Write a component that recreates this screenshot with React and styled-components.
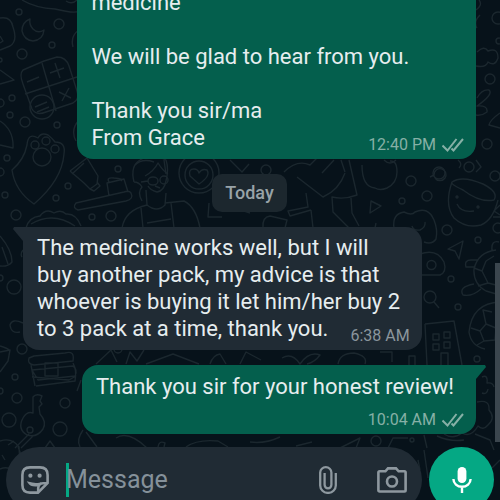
import { createGlobalStyle, styled } from "styled-components";

export default function App() {
    return (
        <Screen>
            <GlobalStyle />
            <Wallpaper />
            <Chat>
                <Bubble $sent $wide>
                    <Text>{"medicine\n\nWe will be glad to hear from you.\n\nThank you sir/ma\nFrom Grace"}</Text>
                    <Meta $sent>
                        12:40 PM <Ticks />
                    </Meta>
                </Bubble>
                <Day>Today</Day>
                <Bubble $wide $tail>
                    <Text>
                        The medicine works well, but I will buy another pack, my advice is that whoever is
                        buying it let him/her buy 2 to 3 pack at a time, thank you.
                    </Text>
                    <Meta>6:38 AM</Meta>
                </Bubble>
                <Bubble $sent $tail $stacked>
                    <Text>Thank you sir for your honest review!</Text>
                    <Meta $sent>
                        10:04 AM <Ticks />
                    </Meta>
                </Bubble>
            </Chat>
            <Composer>
                <Field>
                    <IconButton type="button" aria-label="Stickers">
                        <StickerIcon />
                    </IconButton>
                    <Entry>
                        <Caret />
                        <Input type="text" placeholder="Message" aria-label="Message" />
                    </Entry>
                    <IconButton type="button" aria-label="Attach">
                        <ClipIcon />
                    </IconButton>
                    <IconButton type="button" aria-label="Camera">
                        <CameraIcon />
                    </IconButton>
                </Field>
                <MicButton type="button" aria-label="Record voice message">
                    <MicIcon />
                </MicButton>
            </Composer>
            <ScrollThumb />
        </Screen>
    )
}

const Ticks = () => (
    <svg width="22" height="14" viewBox="0 0 22 14" fill="none" stroke="currentColor" strokeWidth="2">
        <path d="M0.5 7.5 5.5 12.5 14.5 1M9.5 10.5 11.5 12.5 21 1" />
    </svg>
)

const StickerIcon = () => (
    <svg width="28" height="28" viewBox="0 0 28 28" fill="none" stroke="currentColor" strokeWidth="2.6">
        <path d="M9 1.4H19Q26.6 1.4 26.6 9V17L17 26.6H9Q1.4 26.6 1.4 19V9Q1.4 1.4 9 1.4Z" />
        <path d="M26 17.2H22Q17.5 17.2 17.2 22V26" />
        <path d="M7.6 16.6Q10 20.5 16.5 19.6L18.5 17.5Q13 18.4 7.6 16.6Z" fill="currentColor" strokeWidth="1.6" />
        <circle cx="9.4" cy="9.7" r="2.1" fill="currentColor" stroke="none" />
        <circle cx="18.6" cy="9.7" r="2.1" fill="currentColor" stroke="none" />
    </svg>
)

const ClipIcon = () => (
    <svg width="18" height="28" viewBox="0 0 18 28" fill="none" stroke="currentColor" strokeWidth="2.3">
        <path d="M16.8 7V19.5A7.8 7.4 0 0 1 1.2 19.5V6.5A5.6 5.3 0 0 1 12.4 6.5V18.8A3.3 3.5 0 0 1 5.6 18.8V7" />
    </svg>
)

const CameraIcon = () => (
    <svg width="30" height="26" viewBox="0 0 30 26" fill="none" stroke="currentColor" strokeWidth="2.6">
        <path d="M2.6 4.3H8.4L11 1.4H19L21.6 4.3H27.4Q28.6 4.3 28.6 5.5V23.3Q28.6 24.5 27.4 24.5H2.6Q1.4 24.5 1.4 23.3V5.5Q1.4 4.3 2.6 4.3Z" />
        <circle cx="15" cy="14.5" r="5" />
    </svg>
)

const MicIcon = () => (
    <svg width="20" height="28" viewBox="0 0 20 28" fill="none" stroke="currentColor" strokeWidth="2.4">
        <rect x="5.6" y="1" width="8.8" height="16" rx="4.4" fill="currentColor" stroke="none" />
        <path d="M1.4 13A8.6 7.8 0 0 0 18.6 13M10 20.5V27" />
    </svg>
)

// [cx, cy, r]
const dots = [
    [19, 12, 3], [59, 24, 5], [52, 45, 3], [22, 54, 5], [0, 60, 2], [12, 98, 3], [0, 103, 4],
    [10, 115, 3], [25, 122, 5], [57, 125, 3], [7, 158, 3], [0, 172, 4], [5, 195, 3], [16, 215, 5],
    [56, 198, 3], [68, 186, 3], [118, 169, 3], [92, 217, 3], [111, 216, 5], [14, 287, 7], [0, 278, 3],
    [22, 349, 5], [15, 377, 3], [17, 398, 5], [9, 420, 7], [65, 403, 5], [60, 429, 7], [0, 391, 3],
    [498, 18, 6], [499, 41, 3], [490, 79, 5], [487, 144, 5], [469, 167, 5], [495, 176, 5],
    [439, 173, 6], [411, 181, 5], [402, 201, 3], [427, 196, 5], [447, 230, 5], [478, 240, 3],
    [498, 228, 5], [451, 279, 3], [458, 307, 3], [477, 359, 3], [376, 441, 5], [266, 170, 5],
    [118, 349, 4], [412, 440, 2],
]

const doodles = [
    // crescent moon
    "M30 19Q22 22 22 31Q24 40 33 41Q43 40 44 30Q38 34 33 29Q29 25 30 19Z",
    // whale tail and folded page at the top left
    "M22 0Q35 8 55 9Q75 14 79 11M66 1Q72 5 77 0M0 18Q11 16 13 27Q18 41 10 46L0 50M0 36L3 41L0 43",
    "M0 70L14 80L0 84M79 30Q70 36 73 47M79 120Q70 130 76 141",
    // calculator
    "M23 70Q19 74 23 84L32 109Q36 116 46 112L73 103Q80 99 77 91L69 66Q66 57 57 57L44 61Z",
    "M42 63L56 111M25 94L77 77M27 82L39 77M50 73L64 68M55 63L60 78M59 92L71 98M69 88L62 101",
    "M30 107A12 12 0 0 1 54 107A12 12 0 0 1 30 107M35 107L47 102M37 112L49 107M0 121Q14 130 13 148L0 145",
    // paw shield
    "M27 145Q28 132 38 138Q41 132 48 135Q53 139 55 142Q66 142 64 154Q62 180 34 204Q15 191 12 170Q24 160 27 145Z",
    "M33 157A9 9 0 0 1 51 157A9 9 0 0 1 33 157M31 145A4 4 0 0 1 39 145A4 4 0 0 1 31 145M42 141A4 4 0 0 1 50 141A4 4 0 0 1 42 141M51 149A4 4 0 0 1 59 149A4 4 0 0 1 51 149",
    // tube and toothbrush
    "M70 171L87 158L98 176L97 184L90 189L84 183L70 171M72 174L84 163M90 189L94 191L100 186L97 182",
    "M76 203Q72 208 78 210L126 201Q134 199 131 193Q129 190 124 192ZM109 196L107 183L124 179L128 192M109 182Q106 177 114 178Q124 179 121 181",
    // doctor with glasses
    "M134 182Q130 166 140 160Q151 152 166 160Q169 169 166 181Q164 191 157 192Q150 190 148 186M134 182Q139 182 142 187Q137 192 142 201M145 176Q154 171 158 163Q163 171 168 174",
    "M148 181A5 4 0 0 1 158 181A5 4 0 0 1 148 181M160 180A4 4 0 0 1 168 180A4 4 0 0 1 160 180M141 182L148 181M155 186L160 188",
    "M146 190L147 205Q157 213 165 205L166 193M122 228Q125 210 147 205M165 203L184 201Q196 207 200 228M141 208L143 228M171 203L174 228M147 223L171 219",
    // plate with heart
    "M179 173A20 20 0 0 1 219 173A20 20 0 0 1 179 173M185 175A14 14 0 0 1 213 175A14 14 0 0 1 185 175M199 184L190 176Q188 169 194 169Q198 169 199 173Q202 168 207 170Q211 176 199 184Z",
    "M209 203L208 217H222M230 160L242 172L249 164M250 213Q240 211 238 203",
    // cap, legs and walker
    "M284 172Q297 159 310 165L317 158M297 177L323 197Q339 190 345 173M349 160L357 195Q344 200 332 197L333 212L349 228M306 193L308 207L288 211L290 216L311 210M311 210L313 228M351 198L352 213L359 226M263 228Q262 217 270 216L287 220L285 228",
    // apple and pointers
    "M362 165Q362 187 375 188Q380 191 387 188Q397 183 397 172Q397 160 390 161M371 201L370 213L381 206ZM375 228L376 223M430 177L434 175A6 6 0 1 1 435 178",
    // smiling cup
    "M452 182Q444 205 454 218Q466 229 481 225Q493 220 498 200M452 182Q462 175 483 184Q499 192 494 200Q480 203 463 190Q450 184 452 182M457 204Q461 213 474 211M493 217L500 217M500 205L494 211L500 215",
    "M456 197A1 1 0 0 1 458 197A1 1 0 0 1 456 197M477 207A1 1 0 0 1 479 207A1 1 0 0 1 477 207",
    // cloud face
    "M394 228Q392 214 404 212Q412 216 415 212Q428 206 434 220Q438 230 436 239Q432 245 424 242M412 226Q413 231 420 230Q426 227 425 222",
    "M448 249L463 241L459 259L455 251ZM420 254Q437 248 444 262Q447 272 440 275L421 275M427 265A4 4 0 0 1 436 265A4 4 0 0 1 427 265M424 297A6 6 0 0 1 436 297A6 6 0 0 1 424 297M434 302L439 308",
    // turtle
    "M496 250Q478 252 474 269Q473 284 486 291L500 295M486 261L482 271L488 283L500 286M486 261L494 256M474 268L482 271M478 286L488 283M475 267L466 267Q464 260 471 260L478 260M474 284Q458 287 463 295Q472 297 481 289M492 250Q491 240 499 242",
    // football
    "M500 302Q472 303 469 332Q471 346 485 349M480 331L486 324L496 328L495 340L484 341ZM480 331L471 328M486 324L483 310L492 312M484 341L477 345",
    // building
    "M425 324L454 321L462 365M425 324L427 365M433 334H439V340H433ZM444 332H450V338H444ZM433 344H439V350H433ZM444 342H450V348H444ZM441 365V353H448V365M409 365V356H415V365",
    // flower and leaf on the right
    "M476 10Q483 5 479 0M477 28Q473 22 480 15M477 52Q484 45 488 51Q498 47 498 58Q495 67 488 62Q486 68 476 66M477 98Q482 89 489 90Q494 94 477 106Q488 105 487 112Q482 116 476 115M500 113Q490 120 489 125L500 128M476 160L481 167L476 172",
    // wedge and sheep at the left
    "M0 236Q12 250 12 262Q8 267 0 266M2 247L8 264M26 228Q29 217 40 216Q46 208 54 213Q61 209 66 214Q76 213 81 226M31 224Q53 211 75 226M23 323Q12 318 10 325Q11 334 20 332M23 250Q20 254 22 257",
    "M0 352L10 350L8 361L0 372M0 346Q7 348 9 350",
    // scroll stack
    "M34 356L65 353Q75 350 73 361L34 365Q27 364 29 358ZM32 370L73 366Q78 370 75 376L38 380ZM32 377L69 380L76 376M36 386L75 381Q77 370 73 363M31 365L35 386M45 363H58V376H45Z",
    // key
    "M33 397Q36 393 42 396L40 401L42 404L39 407L40 414Q47 422 43 429Q37 438 27 435Q17 429 23 418Q27 411 33 413ZM27 430A3 3 0 0 1 33 430A3 3 0 0 1 27 430M29 434L15 448M33 436L21 448",
    // mascot head by the composer
    "M0 441Q12 437 19 447L20 465M18 447Q25 460 15 470M2 455L5 460M8 445L14 441M0 469Q7 466 12 470",
    "M77 391L81 380M83 430Q76 440 80 447M86 432L97 447M116 438Q128 430 147 448M45 448L50 441L55 448M158 447Q159 440 165 443L164 447M186 447Q197 439 218 441L228 447",
    // mountains between the bubbles
    "M96 364L111 350L117 362M126 364L130 352L137 361L144 350M146 364L173 354L199 364M210 364Q213 355 220 354L226 364M282 358Q292 352 300 364Q309 351 320 355Q315 362 307 364M338 364Q340 353 354 353Q368 356 365 364M380 352H392V362M240 364L246 352L261 360",
    // strip above the day label
    "M135 165Q142 158 154 162M164 160L166 174M322 173L334 160M341 160L345 172M384 160Q390 166 396 160M458 160Q463 164 459 168",
    // foliage by the scrollbar
    "M482 377Q488 374 487 383Q493 382 494 387M482 393Q487 395 488 389M477 402Q490 399 489 410Q496 418 488 425Q483 431 478 426Q471 438 462 433Q453 440 444 434M475 434L490 440L494 450M424 435L427 448M437 436Q450 442 464 440",
    "M340 448L360 438L356 448M388 448L393 438L408 438M250 442Q265 444 280 437M296 446L312 442M424 450L428 478M418 460L420 470M492 468L500 460",
]

const Wallpaper = () => (
    <Pattern viewBox="0 0 500 500" preserveAspectRatio="xMidYMid slice" aria-hidden="true">
        {dots.map(([cx, cy, r]) => (
            <circle key={`${cx}-${cy}`} cx={cx} cy={cy} r={r} />
        ))}
        {doodles.map((d) => (
            <path key={d} d={d} />
        ))}
    </Pattern>
)

const GlobalStyle = createGlobalStyle`
    * {
        box-sizing: border-box;
    }

    body {
        margin: 0;
        background-color: #07121a;
        font-family: Roboto, "Liberation Sans", sans-serif;
    }
`

const Screen = styled.main`
    position: relative;
    display: flex;
    flex-direction: column;
    height: 100vh;
    overflow: hidden;
`

const Pattern = styled.svg`
    position: absolute;
    inset: 0;
    width: 100%;
    height: 100%;
    fill: none;
    stroke: #1b272e;
    stroke-width: 1.4;
    stroke-linejoin: round;
`

const Chat = styled.section`
    position: relative;
    flex: 1;
    min-height: 0;
    display: flex;
    flex-direction: column;
    justify-content: flex-end;
    gap: 15px;
    padding: 0 24px 13px 23px;
`

const Bubble = styled.article`
    position: relative;
    flex: none;
    display: grid;
    align-self: ${(props) => (props.$sent ? "flex-end" : "flex-start")};
    width: ${(props) => (props.$wide ? "88%" : "auto")};
    padding: 7px 12px 4px 14px;
    border-radius: 16px;
    background-color: ${(props) => (props.$sent ? "#045f4d" : "#202b34")};
    color: #e6edef;

    /* the time shares the last line of text unless it is stacked */
    & > * {
        grid-column: 1;
        grid-row: 1;
    }

    & > footer {
        grid-row: ${(props) => (props.$stacked ? 2 : 1)};
    }

    & > p {
        padding: ${(props) => (props.$stacked ? "1px 10px 10px 0" : "0 4px 4px 0")};
    }

    ${(props) => props.$tail && `
        border-top-${props.$sent ? "right" : "left"}-radius: 0;

        &::before {
            content: '';
            position: absolute;
            top: 0;
            ${props.$sent ? "left" : "right"}: 100%;
            width: 10px;
            height: 14px;
            background-color: inherit;
            clip-path: ${props.$sent ? "polygon(0 0, 90% 0, 100% 15%, 0 100%)" : "polygon(100% 0, 10% 0, 0 15%, 100% 100%)"};
        }
    `}
`

const Text = styled.p`
    margin: 0;
    font-size: 22px;
    line-height: 27px;
    white-space: pre-line;
`

const Meta = styled.footer`
    display: flex;
    align-items: center;
    align-self: end;
    justify-self: end;
    gap: 6px;
    font-size: 16px;
    line-height: 20px;
    color: ${(props) => (props.$sent ? "#86b0a6" : "#8b969d")};
`

const Day = styled.time`
    flex: none;
    align-self: center;
    padding: 6px 13px;
    border-radius: 10px;
    background-color: #1c272e;
    color: #98a3a8;
    font-size: 18px;
    font-weight: 500;
    line-height: 26px;
`

const Composer = styled.form`
    position: relative;
    flex: none;
    display: flex;
    gap: 7px;
    height: 53px;
    padding: 0 6px;
    overflow: hidden;
`

const Field = styled.div`
    flex: 1;
    min-width: 0;
    height: 66px;
    display: flex;
    align-items: center;
    gap: 40px;
    padding: 0 15px;
    border-radius: 33px;
    background-color: #202b34;
`

const IconButton = styled.button`
    flex: none;
    display: flex;
    padding: 0;
    border: 0;
    background: none;
    color: #8e989f;
    cursor: pointer;
`

const Entry = styled.div`
    flex: 1;
    min-width: 0;
    display: flex;
    align-items: center;
    margin-left: -23px;
`

const Caret = styled.span`
    flex: none;
    width: 3px;
    height: 34px;
    margin-right: -3px;
    background-color: #05a884;
`

const Input = styled.input`
    flex: 1;
    min-width: 0;
    padding: 0;
    border: 0;
    outline: 0;
    background: none;
    color: #e6edef;
    font-family: inherit;
    font-size: 25px;
    line-height: 34px;

    &::placeholder {
        color: #85919a;
        opacity: 1;
    }
`

const MicButton = styled.button`
    flex: none;
    display: flex;
    align-items: center;
    justify-content: center;
    width: 65px;
    height: 65px;
    padding: 0;
    border: 0;
    border-radius: 50%;
    background-color: #05a884;
    color: #fff;
    cursor: pointer;
`

const ScrollThumb = styled.div`
    position: absolute;
    top: 263px;
    right: 0;
    width: 5px;
    height: 179px;
    background-color: #3b464e;
`
